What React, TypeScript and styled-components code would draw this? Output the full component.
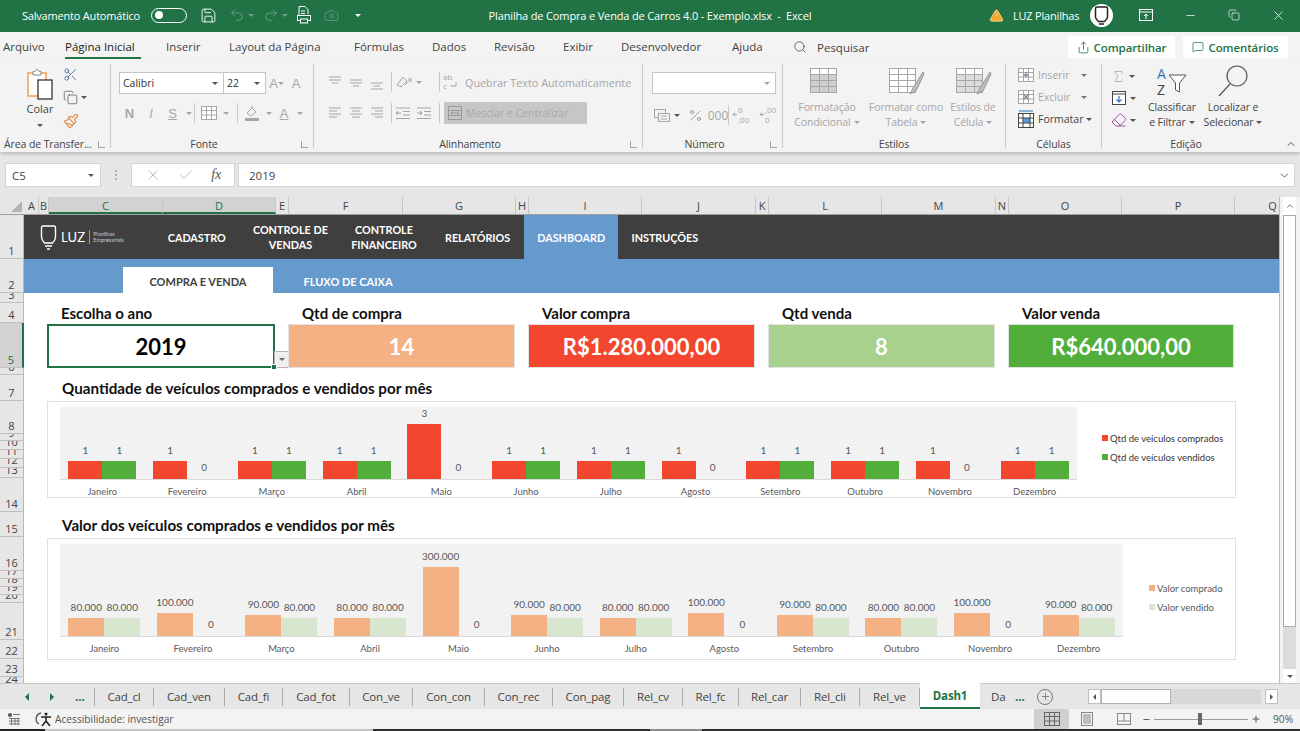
import styled, { createGlobalStyle } from "styled-components";
import {
  Scissors, Copy, Paintbrush, Search, Share, MessageSquare, Save, Undo2, Redo2, Camera, X, Check,
  Minus, Plus, Sigma, Eraser, TriangleAlert, ChevronDown, ChevronUp, Percent,
} from "lucide-react";

const GlobalStyle = createGlobalStyle`
  html, body { margin: 0; padding: 0; background: #fff; }
  body { font-family: "Open Sans", sans-serif; }
  * { box-sizing: border-box; }
`;

const Window = styled.div`
  width: 1300px;
  height: 731px;
  overflow: hidden;
  display: flex;
  flex-direction: column;
  background: #e6e6e6;
`;

/* title bar */
const TitleBar = styled.header`
  height: 32px;
  flex: none;
  background: #217346;
  color: #fff;
  display: grid;
  grid-template-columns: 1fr auto 1fr;
  align-items: center;
  font-size: 11px;
  padding-bottom: 2px;
`;
const TitleLeft = styled.div`
  display: flex;
  align-items: center;
  padding-left: 22px;
`;
const AutoSaveLabel = styled.span`
  width: 129px;
  white-space: nowrap;
  letter-spacing: -0.2px;
`;
const Toggle = styled.span`
  width: 36px;
  height: 15px;
  border: 1.5px solid #fff;
  border-radius: 8px;
  display: flex;
  align-items: center;
  padding-left: 3px;
  &::before {
    content: "";
    width: 8px;
    height: 8px;
    border-radius: 50%;
    background: #fff;
  }
`;
const QuickCell = styled.span<{ $w: number; $ml?: number; $dim?: boolean }>`
  width: ${(p) => p.$w}px;
  margin-left: ${(p) => p.$ml ?? 0}px;
  display: flex;
  align-items: center;
  justify-content: center;
  gap: 3px;
  color: ${(p) => (p.$dim ? "#6c9f84" : "#fff")};
`;
const WindowTitle = styled.div`
  white-space: nowrap;
  letter-spacing: -0.15px;
`;
const TitleRight = styled.div`
  display: flex;
  align-items: center;
  justify-content: flex-end;
`;
const UserName = styled.span`
  width: 68px;
  margin-left: 9px;
  white-space: nowrap;
  letter-spacing: -0.2px;
`;
const Avatar = styled.span`
  width: 23px;
  height: 23px;
  border-radius: 50%;
  background: #fff;
  margin: 0 11px 0 9px;
  display: flex;
  align-items: center;
  justify-content: center;
`;
const WinButton = styled.span<{ $w: number }>`
  width: ${(p) => p.$w}px;
  display: flex;
  justify-content: center;
  align-items: center;
`;

/* ribbon tabs */
const TabsRow = styled.nav`
  height: 30px;
  flex: none;
  background: #f3f3f3;
  display: flex;
  align-items: center;
  padding-left: 3px;
  font-size: 11.5px;
  color: #444;
`;
const RibbonTab = styled.span<{ $w: number; $active?: boolean }>`
  width: ${(p) => p.$w}px;
  height: 30px;
  line-height: 30px;
  white-space: nowrap;
  position: relative;
  color: ${(p) => (p.$active ? "#222" : "#444")};
  &::after {
    content: "";
    display: ${(p) => (p.$active ? "block" : "none")};
    position: absolute;
    left: 0;
    bottom: 3px;
    width: 76px;
    height: 2px;
    background: #217346;
  }
`;
const SearchBox = styled.span`
  display: flex;
  align-items: center;
  gap: 10px;
  margin-left: -4px;
  flex: 1;
`;
const ActionButton = styled.span<{ $w: number; $ml: number }>`
  width: ${(p) => p.$w}px;
  margin-left: ${(p) => p.$ml}px;
  height: 22px;
  background: #fff;
  color: #217346;
  display: flex;
  align-items: center;
  justify-content: center;
  gap: 4px;
  font-size: 11.5px;
  font-weight: 600;
  letter-spacing: -0.1px;
`;
const TabsEnd = styled.span`
  width: 12px;
  flex: none;
`;

/* ribbon */
const Ribbon = styled.section`
  height: 90px;
  flex: none;
  background: #f3f3f3;
  display: flex;
  padding: 2px 0 4px;
  box-shadow: 0 2px 3px rgba(0, 0, 0, 0.18);
  position: relative;
  z-index: 1;
  font-size: 10.5px;
  color: #444;
`;
const Group = styled.div<{ $w: number; $last?: boolean }>`
  width: ${(p) => p.$w}px;
  flex: none;
  display: flex;
  flex-direction: column;
  border-right: ${(p) => (p.$last ? "none" : "1px solid #c8c8c8")};
  position: relative;
`;
const GroupBody = styled.div<{ $pl?: number }>`
  flex: 1;
  display: flex;
  padding-left: ${(p) => p.$pl ?? 0}px;
  min-height: 0;
`;
const GroupTitle = styled.div<{ $align?: string; $pl?: number; $pr?: number }>`
  height: 15px;
  line-height: 15px;
  margin-bottom: -4px;
  text-align: ${(p) => p.$align ?? "center"};
  padding-left: ${(p) => p.$pl ?? 0}px;
  padding-right: ${(p) => p.$pr ?? 0}px;
  white-space: nowrap;
  letter-spacing: -0.1px;
`;
const Launcher = styled.i`
  position: absolute;
  right: 5px;
  bottom: 0;
  width: 7px;
  height: 7px;
  border-left: 1px solid #a0a0a0;
  border-bottom: 1px solid #a0a0a0;
`;
const Caret = styled.i<{ $c?: string; $ml?: number }>`
  display: inline-block;
  flex: none;
  width: 0;
  height: 0;
  margin-left: ${(p) => p.$ml ?? 0}px;
  border-left: 3px solid transparent;
  border-right: 3px solid transparent;
  border-top: 3px solid ${(p) => p.$c ?? "#555"};
`;
const PasteColumn = styled.div`
  width: 40px;
  margin-left: 20px;
  display: flex;
  flex-direction: column;
  align-items: center;
  padding-top: 4px;
  font-size: 11px;
  line-height: 15px;
  gap: 1px;
`;
const PasteCaret = styled.span`
  margin-top: 6px;
  line-height: 0;
`;
const ClipColumn = styled.div`
  margin-left: 3px;
  padding-top: 3px;
  display: flex;
  flex-direction: column;
  gap: 7px;
`;
const ToolStack = styled.div<{ $w?: number; $gap?: number; $pt?: number }>`
  ${(p) => (p.$w ? `width: ${p.$w}px;` : "")}
  display: flex;
  flex-direction: column;
  gap: ${(p) => p.$gap ?? 0}px;
  padding-top: ${(p) => p.$pt ?? 0}px;
`;
const ToolRow = styled.div<{ $h?: number; $gap?: number }>`
  display: flex;
  align-items: center;
  height: ${(p) => p.$h ?? 22}px;
  gap: ${(p) => p.$gap ?? 0}px;
  white-space: nowrap;
`;
const Tool = styled.span<{ $w: number; $c?: string }>`
  width: ${(p) => p.$w}px;
  flex: none;
  display: flex;
  align-items: center;
  justify-content: center;
  color: ${(p) => p.$c ?? "#a6a6a6"};
  font-size: 12px;
`;
const ToolSep = styled.i`
  width: 1px;
  height: 20px;
  background: #c8c8c8;
  flex: none;
`;
const DropBox = styled.span<{ $w: number; $size?: boolean }>`
  width: ${(p) => p.$w}px;
  height: 22px;
  background: #fff;
  border: 1px solid #c6c6c6;
  margin-left: ${(p) => (p.$size ? "-1px" : 0)};
  display: flex;
  align-items: center;
  justify-content: space-between;
  padding: 0 5px 0 3px;
  font-size: 10.5px;
  color: #333;
`;
const FontIcon = styled.span<{ $c?: string }>`
  font-family: "Liberation Sans", sans-serif;
  color: ${(p) => p.$c ?? "#a6a6a6"};
  font-size: 13px;
`;
const WrapText = styled.span`
  color: #a6a6a6;
  margin-left: 3px;
  font-size: 10.8px;
`;
const MergeBox = styled.span`
  width: 143px;
  height: 22px;
  background: #c6c6c6;
  color: #a8a8a8;
  display: flex;
  align-items: center;
  gap: 3px;
  padding-left: 3px;
  font-size: 10.5px;
  white-space: nowrap;
`;
const BigTool = styled.div<{ $w: number; $dark?: boolean }>`
  width: ${(p) => p.$w}px;
  flex: none;
  display: flex;
  flex-direction: column;
  align-items: center;
  color: ${(p) => (p.$dark ? "#444" : "#a6a6a6")};
  text-align: center;
  line-height: 15px;
  font-size: 10.5px;
  white-space: nowrap;
  letter-spacing: -0.1px;
`;
const BigIcon = styled.div`
  height: 34px;
  margin-bottom: 2px;
  display: flex;
  align-items: center;
  justify-content: center;
`;
const LabelLine = styled.span`
  display: inline-flex;
  align-items: center;
  gap: 3px;
`;
const CellRow = styled.div<{ $dark?: boolean }>`
  height: 22px;
  display: flex;
  align-items: center;
  gap: 3px;
  white-space: nowrap;
  color: ${(p) => (p.$dark ? "#444" : "#a6a6a6")};
`;
const CollapseArrow = styled.span`
  position: absolute;
  right: -27px;
  bottom: -2px;
  color: #555;
  line-height: 0;
`;

/* formula bar */
const FormulaBar = styled.div`
  height: 45px;
  flex: none;
  background: #e6e6e6;
  display: flex;
  padding: 11px 5px 10px 5px;
  font-size: 11.5px;
  color: #444;
`;
const NameBox = styled.div`
  width: 96px;
  background: #fff;
  border: 1px solid #d4d4d4;
  display: flex;
  align-items: center;
  justify-content: space-between;
  padding: 0 6px;
`;
const GripDots = styled.div`
  width: 30px;
  display: flex;
  flex-direction: column;
  align-items: center;
  justify-content: center;
  gap: 2px;
  & > i {
    width: 2px;
    height: 2px;
    background: #b0b0b0;
  }
`;
const FxBox = styled.div`
  width: 104px;
  background: #fff;
  border: 1px solid #d4d4d4;
  display: flex;
  align-items: center;
  justify-content: space-around;
  padding: 0 4px;
  color: #b0b0b0;
`;
const FxLabel = styled.span`
  font-family: "Liberation Serif", serif;
  font-style: italic;
  font-size: 14px;
  color: #555;
`;
const FormulaInput = styled.div`
  flex: 1;
  margin-left: 3px;
  background: #fff;
  border: 1px solid #d4d4d4;
  display: flex;
  align-items: center;
  justify-content: space-between;
  padding: 0 3px 0 10px;
`;

/* grid */
const GridArea = styled.div`
  flex: 1;
  min-height: 0;
  display: flex;
`;
const GridMain = styled.div`
  width: 1280px;
  flex: none;
  display: flex;
  flex-direction: column;
  border-right: 1px solid #bcbcbc;
`;
const ColumnHeaders = styled.div`
  height: 18px;
  flex: none;
  display: flex;
  overflow: hidden;
  border-bottom: 1px solid #9f9f9f;
`;
const Corner = styled.div`
  width: 25px;
  flex: none;
  display: flex;
  align-items: flex-end;
  justify-content: flex-end;
  padding: 0 3px 2px 0;
`;
const ColumnHead = styled.div<{ $w: number; $sel?: boolean }>`
  width: ${(p) => p.$w}px;
  flex: none;
  text-align: center;
  font-size: 11px;
  line-height: 17px;
  color: ${(p) => (p.$sel ? "#217346" : "#444")};
  background: ${(p) => (p.$sel ? "#d2d2d2" : "#e6e6e6")};
  border-right: 1px solid #c6c6c6;
  ${(p) => (p.$sel ? "border-bottom: 2px solid #217346;" : "")}
`;
const GridBody = styled.div`
  flex: 1;
  min-height: 0;
  display: flex;
  overflow: hidden;
`;
const RowHeaders = styled.div`
  width: 24px;
  flex: none;
  overflow: hidden;
`;
const RowHead = styled.div<{ $h: number; $sel?: boolean }>`
  height: ${(p) => p.$h}px;
  overflow: hidden;
  display: flex;
  align-items: flex-end;
  justify-content: center;
  font-size: 11px;
  line-height: 13px;
  padding-bottom: 1px;
  color: ${(p) => (p.$sel ? "#217346" : "#444")};
  background: ${(p) => (p.$sel ? "#d2d2d2" : "#e6e6e6")};
  border-bottom: 1px solid #c0c0c0;
  border-right: ${(p) => (p.$sel ? "2px solid #217346" : "1px solid #b8b8b8")};
`;
const Sheet = styled.main`
  flex: 1;
  min-width: 0;
  background: #fff;
  display: flex;
  flex-direction: column;
  font-family: Lato, sans-serif;
`;
const TopNav = styled.div`
  height: 44px;
  flex: none;
  background: #3f3f3f;
  display: flex;
  padding-left: 16px;
`;
const Logo = styled.div`
  width: 110px;
  display: flex;
  align-items: center;
  color: #fff;
`;
const LogoWord = styled.span`
  font-size: 13px;
  margin-left: 4px;
  letter-spacing: 0.2px;
`;
const LogoDivider = styled.i`
  width: 1px;
  height: 14px;
  background: #999;
  margin: 0 3px 0 4px;
`;
const LogoSub = styled.span`
  font-size: 5.5px;
  line-height: 6px;
  color: #ccc;
`;
const NavItem = styled.div<{ $active?: boolean }>`
  width: 93.6px;
  flex: none;
  display: flex;
  align-items: center;
  justify-content: center;
  text-align: center;
  font-size: 10.8px;
  line-height: 15px;
  font-weight: 700;
  color: #fff;
  background: ${(p) => (p.$active ? "#6699cc" : "transparent")};
`;
const SubNav = styled.div`
  height: 34px;
  flex: none;
  background: #6699cc;
  display: flex;
  align-items: flex-end;
  padding-left: 99px;
`;
const SubTab = styled.div<{ $active?: boolean }>`
  width: 150px;
  height: 26px;
  line-height: 29px;
  text-align: center;
  font-size: 11px;
  font-weight: 700;
  color: ${(p) => (p.$active ? "#404040" : "#fff")};
  background: ${(p) => (p.$active ? "#fff" : "transparent")};
`;
const Dashboard = styled.div`
  padding: 10px 0 0 23px;
  display: flex;
  flex-direction: column;
`;
const KpiRow = styled.div`
  display: flex;
  gap: 13px;
`;
const Kpi = styled.div<{ $w: number }>`
  width: ${(p) => p.$w}px;
  flex: none;
  display: flex;
  flex-direction: column;
`;
const KpiLabel = styled.div`
  height: 21px;
  padding-left: 14px;
  line-height: 21px;
  font-size: 15px;
  font-weight: 700;
  color: #111;
`;
const KpiValue = styled.div<{ $bg: string; $selected?: boolean }>`
  height: 44px;
  position: relative;
  display: flex;
  align-items: center;
  justify-content: center;
  font-size: 22px;
  font-weight: 700;
  color: ${(p) => (p.$selected ? "#000" : "#fff")};
  background: ${(p) => p.$bg};
  border: ${(p) => (p.$selected ? "2px solid #217346" : "1px solid #e2e2e2")};
`;
const ListButton = styled.span`
  position: absolute;
  right: -17px;
  bottom: -2px;
  width: 16px;
  height: 17px;
  background: #f0f0f0;
  border: 1px solid #b4b4b4;
  display: flex;
  align-items: center;
  justify-content: center;
`;
const FillHandle = styled.span`
  position: absolute;
  right: -4px;
  bottom: -4px;
  width: 6px;
  height: 6px;
  background: #217346;
  border: 1px solid #fff;
`;
const ChartTitle = styled.h2<{ $mt: number }>`
  margin: ${(p) => p.$mt}px 0 0;
  height: 26px;
  line-height: 26px;
  padding-left: 15px;
  font-size: 15.2px;
  font-weight: 700;
  color: #111;
`;
const ChartBox = styled.div<{ $h: number }>`
  width: 1189px;
  height: ${(p) => p.$h}px;
  border: 1px solid #e0e0e0;
  padding: 5px 0 0 12px;
  display: flex;
`;
const PlotColumn = styled.div<{ $w: number }>`
  width: ${(p) => p.$w}px;
  flex: none;
`;
const Plot = styled.div<{ $h: number }>`
  height: ${(p) => p.$h}px;
  background: #f2f2f2;
  border-bottom: 1px solid #d9d9d9;
  display: flex;
`;
const MonthGroup = styled.div`
  flex: 1;
  display: flex;
  justify-content: center;
  align-items: flex-end;
`;
const BarCol = styled.div<{ $w: number }>`
  width: ${(p) => p.$w}px;
  display: flex;
  flex-direction: column;
  align-items: center;
`;
const BarValue = styled.span`
  font-size: 10px;
  line-height: 12px;
  margin-bottom: 5px;
  color: #595959;
  white-space: nowrap;
`;
const Bar = styled.div<{ $c: string; $h: number }>`
  width: 100%;
  height: ${(p) => p.$h}px;
  background: ${(p) => p.$c};
`;
const MonthRow = styled.div`
  display: flex;
  height: 22px;
`;
const MonthName = styled.span`
  flex: 1;
  text-align: center;
  font-size: 9.5px;
  line-height: 24px;
  color: #595959;
`;
const Legend = styled.div<{ $top: number; $ml: number }>`
  margin: ${(p) => p.$top}px 0 0 ${(p) => p.$ml}px;
  display: flex;
  flex-direction: column;
  gap: 7px;
`;
const LegendItem = styled.div<{ $dark?: boolean }>`
  display: flex;
  align-items: center;
  gap: 2px;
  height: 12px;
  font-size: 9.5px;
  white-space: nowrap;
  color: ${(p) => (p.$dark ? "#333" : "#595959")};
`;
const Swatch = styled.i<{ $c: string }>`
  width: 6px;
  height: 6px;
  background: ${(p) => p.$c};
`;

/* vertical scrollbar */
const VScroll = styled.aside`
  flex: 1;
  background: #f3f3f3;
  display: flex;
  flex-direction: column;
  padding-left: 3px;
`;
const ScrollArrow = styled.div<{ $h: number }>`
  width: 13px;
  height: ${(p) => p.$h}px;
  flex: none;
  background: #fff;
  display: flex;
  align-items: center;
  justify-content: center;
`;
const VThumb = styled.div`
  width: 13px;
  height: 412px;
  flex: none;
  background: #fff;
  border: 1px solid #aaa;
`;
const VTrack = styled.div`
  width: 13px;
  flex: 1;
  background: #dcdcdc;
`;

/* sheet tabs */
const SheetTabs = styled.div`
  height: 26px;
  flex: none;
  background: #e6e6e6;
  border-top: 1px solid #c8c8c8;
  display: flex;
  align-items: center;
  font-size: 11.5px;
  color: #444;
`;
const TabNav = styled.div`
  width: 95px;
  flex: none;
  display: flex;
  align-items: center;
  color: #217346;
  padding-left: 25px;
  gap: 21px;
  border-right: 1px solid #aaa;
  height: 18px;
  font-weight: 700;
`;
const NavTriangle = styled.i<{ $right?: boolean }>`
  width: 0;
  height: 0;
  border-top: 4px solid transparent;
  border-bottom: 4px solid transparent;
  ${(p) => (p.$right ? "border-left: 4px solid #217346;" : "border-right: 4px solid #217346;")}
`;
const SheetTab = styled.span<{ $w: number; $active?: boolean }>`
  width: ${(p) => p.$w}px;
  flex: none;
  text-align: center;
  white-space: nowrap;
  letter-spacing: -0.15px;
  ${(p) =>
    p.$active
      ? `height: 26px; line-height: 25px; margin-top: -1px; background: #fff; color: #217346; font-weight: 700; border-bottom: 2px solid #217346;`
      : `height: 18px; line-height: 18px; border-right: 1px solid #aaa;`}
`;
const PlainTab = styled.span`
  margin-left: 11px;
  width: 24px;
`;
const GreenDots = styled.span`
  color: #217346;
  font-weight: 700;
  width: 20px;
`;
const AddSheet = styled.span`
  width: 16px;
  height: 16px;
  margin-left: 2px;
  border: 1px solid #777;
  border-radius: 50%;
  display: flex;
  align-items: center;
  justify-content: center;
  color: #666;
`;
const HScroll = styled.div`
  margin-left: 35px;
  width: 190px;
  height: 15px;
  display: flex;
  align-items: center;
`;
const HArrow = styled.span<{ $ml?: number }>`
  width: 13px;
  height: 15px;
  flex: none;
  margin-left: ${(p) => p.$ml ?? 0}px;
  background: #fff;
  border: 1px solid #c0c0c0;
  display: flex;
  align-items: center;
  justify-content: center;
`;
const HThumb = styled.span`
  width: 70px;
  height: 15px;
  flex: none;
  background: #fff;
  border: 1px solid #b0b0b0;
`;
const HTrack = styled.span`
  flex: 1;
  height: 15px;
  background: #d8d8d8;
`;
const SmallTriangle = styled.i<{ $right?: boolean }>`
  width: 0;
  height: 0;
  border-top: 3px solid transparent;
  border-bottom: 3px solid transparent;
  ${(p) => (p.$right ? "border-left: 3px solid #555;" : "border-right: 3px solid #555;")}
`;

/* status bar */
const StatusBar = styled.footer`
  height: 20px;
  flex: none;
  background: #f3f3f3;
  display: flex;
  align-items: center;
  font-size: 10.2px;
  color: #555;
`;
const StatusLeft = styled.div`
  width: 1034px;
  flex: none;
  display: flex;
  align-items: center;
  padding-left: 7px;
`;
const StatusGap = styled.span`
  width: 12px;
  flex: none;
`;
const AccessText = styled.span`
  white-space: nowrap;
`;
const ViewButton = styled.span<{ $w: number; $active?: boolean }>`
  width: ${(p) => p.$w}px;
  height: 20px;
  flex: none;
  display: flex;
  align-items: center;
  justify-content: center;
  color: #666;
  background: ${(p) => (p.$active ? "#cfcfcf" : "transparent")};
`;
const ZoomTrack = styled.span`
  width: 94px;
  height: 1px;
  margin: 0 3px;
  background: #999;
  display: flex;
  align-items: center;
  padding-left: 44px;
  &::before {
    content: "";
    width: 4px;
    height: 12px;
    background: #666;
  }
`;
const ZoomValue = styled.span`
  margin-left: 12px;
`;
const TaskbarEdge = styled.div`
  height: 2px;
  flex: none;
  background: linear-gradient(
    to right,
    #222 0 45px,
    #c4c4c4 45px 373px,
    #2c2c2c 373px 650px,
    #8c8c8c 650px 702px,
    #2c2c2c 702px
  );
`;

const Lines = ({ rows, c = "#a6a6a6", w = 16 }: { rows: number[][]; c?: string; w?: number }) => (
  <svg width={w} height="16" viewBox="0 0 16 16" stroke={c} strokeWidth="1" fill="none">
    {rows.map((r, i) => (
      <line key={i} x1={r[0]} x2={r[1]} y1={r[2]} y2={r[2]} />
    ))}
  </svg>
);
const PasteIcon = () => (
  <svg width="27" height="32" viewBox="0 0 27 32" fill="none">
    <rect x="1" y="5" width="18" height="23" fill="#fff" stroke="#f0a45c" strokeWidth="1.6" />
    <path d="M6 5V3.500h2l2-2.500 2 2.500h2V7H6z" fill="#fff" stroke="#888" />
    <rect x="11" y="12" width="14" height="19" fill="#fff" stroke="#333" strokeWidth="1.3" />
  </svg>
);
const TableIcon = ({ brush, fill }: { brush?: boolean; fill: string }) => (
  <svg width="38" height="34" viewBox="0 0 38 34" fill="none" stroke="#a6a6a6">
    <rect x="2.5" y="4.5" width="26" height="24" fill="#fff" />
    <rect x="3" y="10" width="25" height="18" fill={fill} stroke="none" />
    <path d="M2.5 10.5h26M2.5 16.5h26M2.5 22.5h26M11.5 4.5v24M20.5 4.5v24" />
    {brush && <path d="M36 8 26 24l-3 6 6-3 8-17z" fill="#bdbdbd" stroke="#999" />}
  </svg>
);
const SmallGrid = ({ c = "#a6a6a6", fill = "#fff" }: { c?: string; fill?: string }) => (
  <svg width="18" height="18" viewBox="0 0 18 18" fill={fill} stroke={c}>
    <rect x="1.5" y="2.5" width="15" height="13" />
    <path d="M1.5 6.5h15M1.5 11h15M6.5 2.5v13M11.5 2.5v13" fill="none" />
  </svg>
);
const PageLayoutIcon = () => (
  <svg width="14" height="16" viewBox="0 0 14 16" fill="none" stroke="#888">
    <rect x="1.500" y="1.500" width="11" height="13" />
    <rect x="4" y="4" width="6" height="8" />
    <path d="M5 6h4M5 8h4M5 10h4" />
  </svg>
);
const PageBreakIcon = () => (
  <svg width="16" height="14" viewBox="0 0 16 14" fill="none" stroke="#888">
    <rect x="1.500" y="1.500" width="13" height="11" />
    <path d="M1.500 9h13M8 1.500V9" />
  </svg>
);
const RibbonOptions = () => (
  <svg width="14" height="12" viewBox="0 0 14 12" fill="none" stroke="#fff">
    <rect x="0.500" y="0.500" width="13" height="11" />
    <path d="M0.500 3h13M7 10V5M5 7l2-2 2 2" />
  </svg>
);
const FormatIcon = () => (
  <svg width="18" height="20" viewBox="0 0 18 20" fill="#fff" stroke="#444">
    <rect x="1.5" y="4.5" width="15" height="14" />
    <rect x="6" y="9" width="7" height="5" fill="#5b9bd5" stroke="none" />
    <path d="M1.5 9h15M1.5 14h15M6 4.5v14M13 4.5v14" fill="none" />
    <path d="M2 2h14" stroke="#2e75b6" />
  </svg>
);
const FillDown = () => (
  <svg width="16" height="16" viewBox="0 0 16 16" fill="#fff" stroke="#444">
    <rect x="1.5" y="1.5" width="13" height="13" />
    <path d="M1.5 4h13" />
    <path d="M8 6v6M5.5 9.5 8 12l2.5-2.5" fill="none" stroke="#2e75b6" strokeWidth="1.2" />
  </svg>
);
const PrintPreview = () => (
  <svg width="16" height="20" viewBox="0 0 16 20" fill="none" stroke="#fff">
    <path d="M3 1.5h6l3 3V9M3 1.5V10" />
    <path d="M5 6h4M5 8.5h4" />
    <rect x="1.5" y="10.5" width="13" height="5" />
    <rect x="4.5" y="14" width="7" height="4" fill="#217346" />
  </svg>
);
const LampLogo = () => (
  <svg width="17" height="26" viewBox="0 0 17 26" fill="none" stroke="#fff" strokeWidth="1.4">
    <path d="M3 2h11c1 0 1.500.5 1.500 1.500V13c0 3-2 5-3 6H4.500c-1-1-3-3-3-6V3.500C1.500 2.500 2 2 3 2z" />
    <path d="M5 22h7M7 25h3" />
  </svg>
);
const UserGlyph = () => (
  <svg width="15" height="19" viewBox="0 0 15 19" fill="none" stroke="#222" strokeWidth="1.5">
    <path d="M3 1h9c1 0 1.500.5 1.500 1.500V11c0 2-2 3.500-3 4.500H4.500c-1-1-3-2.500-3-4.500V2.500C1.500 1.500 2 1 3 1z" />
    <path d="M5 18h5" />
  </svg>
);
const AccessIcon = () => (
  <svg width="22" height="16" viewBox="0 0 22 16" fill="none" stroke="#555" strokeWidth="1.300">
    <path d="M8 2a6 6 0 0 0-2 11" />
    <circle cx="13" cy="3" r="1.500" fill="#222" stroke="none" />
    <path d="M8 6h10M13 6v4l-4 5M13 10l4 5" stroke="#222" strokeWidth="1.600" />
  </svg>
);
const SheetStatusIcon = () => (
  <svg width="14" height="14" viewBox="0 0 14 14" fill="none" stroke="#777">
    <circle cx="3" cy="3" r="2" fill="#555" stroke="none" />
    <path d="M6 2.500h7M2 6.500h11M2 9h11M2 12h11M4.500 6v7M8 6v7M11 6v7" />
  </svg>
);
const SortIcon = () => (
  <svg width="32" height="34" viewBox="0 0 32 34">
    <text x="1" y="15" fontFamily="Open Sans, sans-serif" fontSize="14" fill="#2e75b6">A</text>
    <text x="1" y="31" fontFamily="Open Sans, sans-serif" fontSize="14" fill="#444">Z</text>
    <path d="M13 11h17l-6.500 8v9l-4-2v-7z" fill="#fff" stroke="#555" />
  </svg>
);
const FindIcon = () => (
  <svg width="34" height="34" viewBox="0 0 34 34" fill="none" stroke="#555" strokeWidth="1.200">
    <circle cx="21" cy="12" r="10" />
    <path d="M14 20 3 32" />
  </svg>
);
const WrapIcon = () => (
  <svg width="18" height="20" viewBox="0 0 18 20">
    <text x="1" y="8" fontFamily="Open Sans, sans-serif" fontSize="8" fill="#a6a6a6">ab</text>
    <text x="1" y="17" fontFamily="Open Sans, sans-serif" fontSize="8" fill="#a6a6a6">c</text>
    <path d="M8 14h6V10" fill="none" stroke="#a6a6a6" />
  </svg>
);
const OrientIcon = () => (
  <svg width="18" height="16" viewBox="0 0 18 16" fill="none" stroke="#a6a6a6">
    <path d="M2 11 8 3l4 4-6 6zM10 11l6-6M16 5h-3M16 5v3" />
  </svg>
);
const DecimalIcon = ({ flip }: { flip?: boolean }) => (
  <svg width="22" height="20" viewBox="0 0 22 20" fill="#a6a6a6" stroke="none">
    <text x="6" y="8" fontFamily="Open Sans, sans-serif" fontSize="8">{flip ? ",00" : "0"}</text>
    <text x="6" y="18" fontFamily="Open Sans, sans-serif" fontSize="8">{flip ? "0" : ",00"}</text>
    <path d="M1 9.500h4M3 7.500l-2 2 2 2" fill="none" stroke="#a6a6a6" />
  </svg>
);
const AccountingIcon = () => (
  <svg width="18" height="14" viewBox="0 0 18 14" fill="none" stroke="#a6a6a6">
    <rect x="1.500" y="1.500" width="11" height="8" />
    <rect x="5.500" y="5.500" width="11" height="8" fill="#f3f3f3" />
    <path d="M8 8h6M8 11h6" />
  </svg>
);
const IndentIcon = ({ right }: { right?: boolean }) => (
  <svg width="16" height="16" viewBox="0 0 16 16" fill="none" stroke="#a6a6a6">
    <path d="M1 3h14M8 6.500h7M8 10h7M1 13.500h14" />
    <path d={right ? "M1 8h5M4 6l2 2-2 2" : "M6 8H1M3 6 1 8l2 2"} stroke="#8a9fb5" />
  </svg>
);
const MergeIcon = () => (
  <svg width="16" height="18" viewBox="0 0 16 18" fill="none" stroke="#9a9a9a">
    <rect x="1.500" y="2.500" width="13" height="13" />
    <path d="M1.500 6.500h13M1.500 11.500h13M4 9h8M4 9l2-1.500M4 9l2 1.500M12 9l-2-1.500M12 9l-2 1.500" />
  </svg>
);
const InsertIcon = ({ del }: { del?: boolean }) => (
  <svg width="18" height="16" viewBox="0 0 18 16" fill="#fff" stroke="#a6a6a6">
    <rect x="1.500" y="1.500" width="15" height="13" />
    <path d="M1.500 5.500h15M1.500 10h15M6.500 1.500v13M11.500 1.500v13" fill="none" />
    <path d={del ? "M7 6l4 4M11 6l-4 4" : "M9 5.500v5M6.500 8h5"} fill="none" stroke="#888" strokeWidth="1.300" />
  </svg>
);
const FillColor = () => (
  <svg width="16" height="18" viewBox="0 0 16 18" fill="none" stroke="#a6a6a6">
    <path d="M3 9l5-5 4 4-5 4zM8 4V2" />
    <rect x="1" y="14" width="14" height="3" fill="#a6a6a6" stroke="none" />
  </svg>
);

const columns = [
  { l: "A", w: 14 }, { l: "B", w: 10 }, { l: "C", w: 114, s: true }, { l: "D", w: 113, s: true },
  { l: "E", w: 13 }, { l: "F", w: 114 }, { l: "G", w: 113 }, { l: "H", w: 13 }, { l: "I", w: 113 },
  { l: "J", w: 114 }, { l: "K", w: 13 }, { l: "L", w: 113 }, { l: "M", w: 114 }, { l: "N", w: 13 },
  { l: "O", w: 113 }, { l: "P", w: 113 }, { l: "Q", w: 76 },
];
const rows = [
  [1, 44], [2, 34], [3, 10], [4, 20], [5, 45], [6, 7], [7, 26], [8, 33], [9, 7], [10, 9], [11, 9],
  [12, 9], [13, 10], [14, 34], [15, 25], [16, 34], [17, 8], [18, 8], [19, 8], [20, 8], [21, 37],
  [22, 19], [23, 18], [24, 10],
];
const navItems = [["CADASTRO"], ["CONTROLE DE", "VENDAS"], ["CONTROLE", "FINANCEIRO"], ["RELATÓRIOS"], ["DASHBOARD"], ["INSTRUÇÕES"]];
const kpis = [
  { label: "Escolha o ano", value: "2019", bg: "#fff", w: 228, selected: true },
  { label: "Qtd de compra", value: "14", bg: "#f4b183", w: 227 },
  { label: "Valor compra", value: "R$1.280.000,00", bg: "#f2462e", w: 227 },
  { label: "Qtd venda", value: "8", bg: "#a9d18e", w: 227 },
  { label: "Valor venda", value: "R$640.000,00", bg: "#52ae3a", w: 226 },
];
const months = ["Janeiro", "Fevereiro", "Março", "Abril", "Maio", "Junho", "Julho", "Agosto", "Setembro", "Outubro", "Novembro", "Dezembro"];
const qtyData = [[1, 1], [1, 0], [1, 1], [1, 1], [3, 0], [1, 1], [1, 1], [1, 0], [1, 1], [1, 1], [1, 0], [1, 1]];
const valueData = [
  [80, 80], [100, 0], [90, 80], [80, 80], [300, 0], [90, 80], [80, 80], [100, 0], [90, 80], [80, 80], [100, 0], [90, 80],
];
const sheetTabs = [
  ["Cad_cl", 59], ["Cad_ven", 71], ["Cad_fi", 58], ["Cad_fot", 67], ["Con_ve", 63], ["Con_con", 72], ["Con_rec", 68],
  ["Con_pag", 71], ["Rel_cv", 59], ["Rel_fc", 56], ["Rel_car", 62], ["Rel_cli", 59], ["Rel_ve", 60],
] as const;

interface ChartProps {
  data: number[][];
  scale: number;
  barWidth: number;
  plotWidth: number;
  plotHeight: number;
  height: number;
  colors: string[];
  legend: string[];
  legendTop: number;
  legendLeft: number;
  legendDark?: boolean;
  format: (v: number) => string;
}

function Chart({ data, scale, barWidth, plotWidth, plotHeight, height, colors, legend, legendTop, legendLeft, legendDark, format }: ChartProps) {
  return (
    <ChartBox $h={height}>
      <PlotColumn $w={plotWidth}>
        <Plot $h={plotHeight}>
          {data.map((pair, i) => (
            <MonthGroup key={i}>
              {pair.map((v, j) => (
                <BarCol key={j} $w={barWidth}>
                  <BarValue>{format(v)}</BarValue>
                  <Bar $c={v ? colors[j] : "transparent"} $h={v ? Math.round(v * scale) : 1} />
                </BarCol>
              ))}
            </MonthGroup>
          ))}
        </Plot>
        <MonthRow>
          {months.map((m) => (
            <MonthName key={m}>{m}</MonthName>
          ))}
        </MonthRow>
      </PlotColumn>
      <Legend $top={legendTop} $ml={legendLeft}>
        {legend.map((name, i) => (
          <LegendItem key={name} $dark={legendDark}>
            <Swatch $c={colors[i]} />
            {name}
          </LegendItem>
        ))}
      </Legend>
    </ChartBox>
  );
}

function RibbonBar() {
  return (
    <Ribbon>
      <Group $w={111}>
        <GroupBody>
          <PasteColumn>
            <PasteIcon />
            <span>Colar</span>
            <PasteCaret><Caret /></PasteCaret>
          </PasteColumn>
          <ClipColumn>
            <Scissors size={15} color="#4a6f9c" strokeWidth={1.4} />
            <ToolRow $h={17} $gap={3}><Copy size={15} color="#555" strokeWidth={1.2} /><Caret /></ToolRow>
            <Paintbrush size={16} color="#e08a3c" strokeWidth={1.6} />
          </ClipColumn>
        </GroupBody>
        <GroupTitle $align="left" $pl={4}>Área de Transfer...</GroupTitle>
        <Launcher />
      </Group>
      <Group $w={203}>
        <GroupBody $pl={8}>
          <ToolStack $pt={8} $gap={8}>
            <ToolRow>
              <DropBox $w={105}>Calibri<Caret /></DropBox>
              <DropBox $w={43} $size>22<Caret /></DropBox>
              <Tool $w={21}><FontIcon>A</FontIcon><Caret $c="#a6a6a6" /></Tool>
              <Tool $w={18}><FontIcon>A</FontIcon></Tool>
            </ToolRow>
            <ToolRow>
              <Tool $w={21}><FontIcon><b>N</b></FontIcon></Tool>
              <Tool $w={22}><FontIcon><i>I</i></FontIcon></Tool>
              <Tool $w={21}><FontIcon><u>S</u></FontIcon></Tool>
              <Tool $w={11}><Caret $c="#a6a6a6" /></Tool>
              <ToolSep />
              <Tool $w={27}><SmallGrid /></Tool>
              <Tool $w={7}><Caret $c="#a6a6a6" /></Tool>
              <Tool $w={8} />
              <ToolSep />
              <Tool $w={28}><FillColor /></Tool>
              <Tool $w={6}><Caret $c="#a6a6a6" /></Tool>
              <Tool $w={24}><FontIcon><u>A</u></FontIcon></Tool>
              <Tool $w={8}><Caret $c="#a6a6a6" /></Tool>
            </ToolRow>
          </ToolStack>
        </GroupBody>
        <GroupTitle $pr={16}>Fonte</GroupTitle>
        <Launcher />
      </Group>
      <Group $w={329}>
        <GroupBody $pl={10}>
          <ToolStack $pt={7} $gap={9}>
            <ToolRow>
              <Tool $w={21}><Lines rows={[[2, 14, 3], [2, 14, 6], [5, 11, 9]]} /></Tool>
              <Tool $w={21}><Lines rows={[[2, 14, 6], [2, 14, 9], [5, 11, 12]]} /></Tool>
              <Tool $w={21}><Lines rows={[[2, 14, 9], [5, 11, 12], [2, 14, 15]]} /></Tool>
              <Tool $w={4} />
              <ToolSep />
              <Tool $w={24}><OrientIcon /></Tool>
              <Tool $w={6}><Caret $c="#a6a6a6" /></Tool>
              <Tool $w={17} />
              <ToolSep />
              <Tool $w={22}><WrapIcon /></Tool>
              <WrapText>Quebrar Texto Automaticamente</WrapText>
            </ToolRow>
            <ToolRow>
              <Tool $w={21}><Lines rows={[[2, 14, 3], [2, 10, 6], [2, 14, 9], [2, 10, 12]]} /></Tool>
              <Tool $w={21}><Lines rows={[[2, 14, 3], [4, 12, 6], [2, 14, 9], [4, 12, 12]]} /></Tool>
              <Tool $w={21}><Lines rows={[[2, 14, 3], [6, 14, 6], [2, 14, 9], [6, 14, 12]]} /></Tool>
              <Tool $w={4} />
              <ToolSep />
              <Tool $w={22}><IndentIcon /></Tool>
              <Tool $w={20}><IndentIcon right /></Tool>
              <Tool $w={5} />
              <ToolSep />
              <Tool $w={4} />
              <MergeBox><MergeIcon />Mesclar e Centralizar</MergeBox>
            </ToolRow>
          </ToolStack>
        </GroupBody>
        <GroupTitle $pr={16}>Alinhamento</GroupTitle>
        <Launcher />
      </Group>
      <Group $w={140}>
        <GroupBody $pl={9}>
          <ToolStack $pt={8} $gap={10}>
            <ToolRow><DropBox $w={124}><span /><Caret $c="#a6a6a6" /></DropBox></ToolRow>
            <ToolRow>
              <Tool $w={20}><AccountingIcon /></Tool>
              <Tool $w={10}><Caret /></Tool>
              <Tool $w={26}><Percent size={15} color="#999" strokeWidth={1.5} /></Tool>
              <Tool $w={20}>000</Tool>
              <ToolSep />
              <Tool $w={28}><DecimalIcon /></Tool>
              <Tool $w={26}><DecimalIcon flip /></Tool>
            </ToolRow>
          </ToolStack>
        </GroupBody>
        <GroupTitle $pr={16}>Número</GroupTitle>
        <Launcher />
      </Group>
      <Group $w={223}>
        <GroupBody $pl={6}>
          <BigTool $w={76}>
            <BigIcon><TableIcon fill="#cfcfcf" /></BigIcon>
            Formatação
            <LabelLine>Condicional<Caret $c="#a6a6a6" /></LabelLine>
          </BigTool>
          <BigTool $w={82}>
            <BigIcon><TableIcon fill="#fff" brush /></BigIcon>
            Formatar como
            <LabelLine>Tabela<Caret $c="#a6a6a6" /></LabelLine>
          </BigTool>
          <BigTool $w={52}>
            <BigIcon><TableIcon fill="#dcdcdc" brush /></BigIcon>
            Estilos de
            <LabelLine>Célula<Caret $c="#a6a6a6" /></LabelLine>
          </BigTool>
        </GroupBody>
        <GroupTitle>Estilos</GroupTitle>
      </Group>
      <Group $w={96}>
        <GroupBody $pl={11}>
          <ToolStack>
            <CellRow><InsertIcon />Inserir<Caret $c="#777" $ml={8} /></CellRow>
            <CellRow><InsertIcon del />Excluir<Caret $c="#777" $ml={8} /></CellRow>
            <CellRow $dark><FormatIcon />Formatar<Caret /></CellRow>
          </ToolStack>
        </GroupBody>
        <GroupTitle>Células</GroupTitle>
      </Group>
      <Group $w={168} $last>
        <GroupBody $pl={9}>
          <ToolStack $w={31} $pt={1}>
            <ToolRow $gap={3}><Sigma size={15} color="#a6a6a6" strokeWidth={1.3} /><Caret /></ToolRow>
            <ToolRow $gap={3}><FillDown /><Caret /></ToolRow>
            <ToolRow $gap={3}><Eraser size={16} color="#a64ca6" strokeWidth={1.5} /><Caret /></ToolRow>
          </ToolStack>
          <BigTool $w={60} $dark>
            <BigIcon>
              <SortIcon />
            </BigIcon>
            Classificar
            <LabelLine>e Filtrar<Caret /></LabelLine>
          </BigTool>
          <BigTool $w={62} $dark>
            <BigIcon><FindIcon /></BigIcon>
            Localizar e
            <LabelLine>Selecionar<Caret /></LabelLine>
          </BigTool>
        </GroupBody>
        <GroupTitle>Edição</GroupTitle>
        <CollapseArrow><ChevronUp size={12} strokeWidth={2} /></CollapseArrow>
      </Group>
    </Ribbon>
  );
}

export default function App() {
  return (
    <Window>
      <GlobalStyle />
      <TitleBar>
        <TitleLeft>
          <AutoSaveLabel>Salvamento Automático</AutoSaveLabel>
          <Toggle />
          <QuickCell $w={20} $ml={11}><Save size={17} strokeWidth={1.3} /></QuickCell>
          <QuickCell $w={28} $ml={9} $dim><Undo2 size={16} strokeWidth={1.4} /><Caret $c="#6c9f84" /></QuickCell>
          <QuickCell $w={28} $ml={6} $dim><Redo2 size={16} strokeWidth={1.4} /><Caret $c="#6c9f84" /></QuickCell>
          <QuickCell $w={20} $ml={5}><PrintPreview /></QuickCell>
          <QuickCell $w={20} $ml={7} $dim><Camera size={15} strokeWidth={1.3} /></QuickCell>
          <QuickCell $w={14} $ml={10}><Caret $c="#fff" /></QuickCell>
        </TitleLeft>
        <WindowTitle>Planilha de Compra e Venda de Carros 4.0 - Exemplo.xlsx &nbsp;-&nbsp; Excel</WindowTitle>
        <TitleRight>
          <TriangleAlert size={15} fill="#f5a623" color="#f8d9a0" strokeWidth={1.4} />
          <UserName>LUZ Planilhas</UserName>
          <Avatar><UserGlyph /></Avatar>
          <WinButton $w={44}><RibbonOptions /></WinButton>
          <WinButton $w={44}><Minus size={13} strokeWidth={1.3} /></WinButton>
          <WinButton $w={44}><Copy size={12} strokeWidth={1.3} /></WinButton>
          <WinButton $w={44}><X size={15} strokeWidth={1.2} /></WinButton>
        </TitleRight>
      </TitleBar>
      <TabsRow>
        <RibbonTab $w={62}>Arquivo</RibbonTab>
        <RibbonTab $w={101} $active>Página Inicial</RibbonTab>
        <RibbonTab $w={63}>Inserir</RibbonTab>
        <RibbonTab $w={125}>Layout da Página</RibbonTab>
        <RibbonTab $w={78}>Fórmulas</RibbonTab>
        <RibbonTab $w={62}>Dados</RibbonTab>
        <RibbonTab $w={69}>Revisão</RibbonTab>
        <RibbonTab $w={58}>Exibir</RibbonTab>
        <RibbonTab $w={111}>Desenvolvedor</RibbonTab>
        <RibbonTab $w={65}>Ajuda</RibbonTab>
        <SearchBox><Search size={14} strokeWidth={1.3} />Pesquisar</SearchBox>
        <ActionButton $w={107} $ml={0}><Share size={13} strokeWidth={1.5} />Compartilhar</ActionButton>
        <ActionButton $w={105} $ml={8}><MessageSquare size={12} strokeWidth={1.5} />Comentários</ActionButton>
        <TabsEnd />
      </TabsRow>
      <RibbonBar />
      <FormulaBar>
        <NameBox>C5<Caret /></NameBox>
        <GripDots><i /><i /><i /></GripDots>
        <FxBox><X size={16} strokeWidth={1.3} /><Check size={16} strokeWidth={1.3} /><FxLabel>fx</FxLabel></FxBox>
        <FormulaInput>2019<ChevronDown size={13} strokeWidth={1.5} /></FormulaInput>
      </FormulaBar>
      <GridArea>
        <GridMain>
          <ColumnHeaders>
            <Corner>
              <svg width="11" height="11" viewBox="0 0 11 11"><path d="M11 0v11H0z" fill="#b4b4b4" /></svg>
            </Corner>
            {columns.map((c) => (
              <ColumnHead key={c.l} $w={c.w} $sel={c.s}>{c.l}</ColumnHead>
            ))}
          </ColumnHeaders>
          <GridBody>
            <RowHeaders>
              {rows.map(([n, h]) => (
                <RowHead key={n} $h={h} $sel={n === 5}>{n}</RowHead>
              ))}
            </RowHeaders>
            <Sheet>
              <TopNav>
                <Logo>
                  <LampLogo />
                  <LogoWord>LUZ</LogoWord>
                  <LogoDivider />
                  <LogoSub>Planilhas<br />Empresariais</LogoSub>
                </Logo>
                {navItems.map((lines) => (
                  <NavItem key={lines[0]} $active={lines[0] === "DASHBOARD"}>
                    <span>
                      {lines[0]}
                      {lines[1] && <br />}
                      {lines[1]}
                    </span>
                  </NavItem>
                ))}
              </TopNav>
              <SubNav>
                <SubTab $active>COMPRA E VENDA</SubTab>
                <SubTab>FLUXO DE CAIXA</SubTab>
              </SubNav>
              <Dashboard>
                <KpiRow>
                  {kpis.map((k) => (
                    <Kpi key={k.label} $w={k.w}>
                      <KpiLabel>{k.label}</KpiLabel>
                      <KpiValue $bg={k.bg} $selected={k.selected}>
                        {k.value}
                        {k.selected && (
                          <>
                            <ListButton><Caret $c="#666" /></ListButton>
                            <FillHandle />
                          </>
                        )}
                      </KpiValue>
                    </Kpi>
                  ))}
                </KpiRow>
                <ChartTitle $mt={7}>Quantidade de veículos comprados e vendidos por mês</ChartTitle>
                <Chart
                  data={qtyData}
                  scale={18.4}
                  barWidth={34}
                  plotWidth={1017}
                  plotHeight={73}
                  height={97}
                  colors={["#f2462e", "#52ae3a"]}
                  legend={["Qtd de veículos comprados", "Qtd de veículos vendidos"]}
                  legendTop={25}
                  legendLeft={25}
                  legendDark
                  format={(v) => String(v)}
                />
                <ChartTitle $mt={14}>Valor dos veículos comprados e vendidos por mês</ChartTitle>
                <Chart
                  data={valueData}
                  scale={0.23}
                  barWidth={36}
                  plotWidth={1063}
                  plotHeight={93}
                  height={122}
                  colors={["#f4b183", "#d8e6cf"]}
                  legend={["Valor comprado", "Valor vendido"]}
                  legendTop={38}
                  legendLeft={26}
                  format={(v) => (v ? `${v}.000` : "0")}
                />
              </Dashboard>
            </Sheet>
          </GridBody>
        </GridMain>
        <VScroll>
          <ScrollArrow $h={18}><ChevronUp size={10} strokeWidth={2} color="#555" /></ScrollArrow>
          <VThumb />
          <VTrack />
          <ScrollArrow $h={14}><Caret /></ScrollArrow>
        </VScroll>
      </GridArea>
      <SheetTabs>
        <TabNav>
          <NavTriangle />
          <NavTriangle $right />
          <span>...</span>
        </TabNav>
        {sheetTabs.map(([name, w]) => (
          <SheetTab key={name} $w={w}>{name}</SheetTab>
        ))}
        <SheetTab $w={60} $active>Dash1</SheetTab>
        <PlainTab>Da</PlainTab>
        <GreenDots>...</GreenDots>
        <AddSheet><Plus size={11} strokeWidth={1.6} /></AddSheet>
        <HScroll>
          <HArrow><SmallTriangle /></HArrow>
          <HThumb />
          <HTrack />
          <HArrow $ml={4}><SmallTriangle $right /></HArrow>
        </HScroll>
      </SheetTabs>
      <StatusBar>
        <StatusLeft>
          <SheetStatusIcon />
          <StatusGap />
          <AccessIcon />
          <AccessText>Acessibilidade: investigar</AccessText>
        </StatusLeft>
        <ViewButton $w={35} $active><SmallGrid c="#666" fill="transparent" /></ViewButton>
        <ViewButton $w={36}><PageLayoutIcon /></ViewButton>
        <ViewButton $w={37}><PageBreakIcon /></ViewButton>
        <Minus size={9} strokeWidth={2.5} />
        <ZoomTrack />
        <Plus size={10} strokeWidth={2.5} />
        <ZoomValue>90%</ZoomValue>
      </StatusBar>
      <TaskbarEdge />
    </Window>
  );
}
